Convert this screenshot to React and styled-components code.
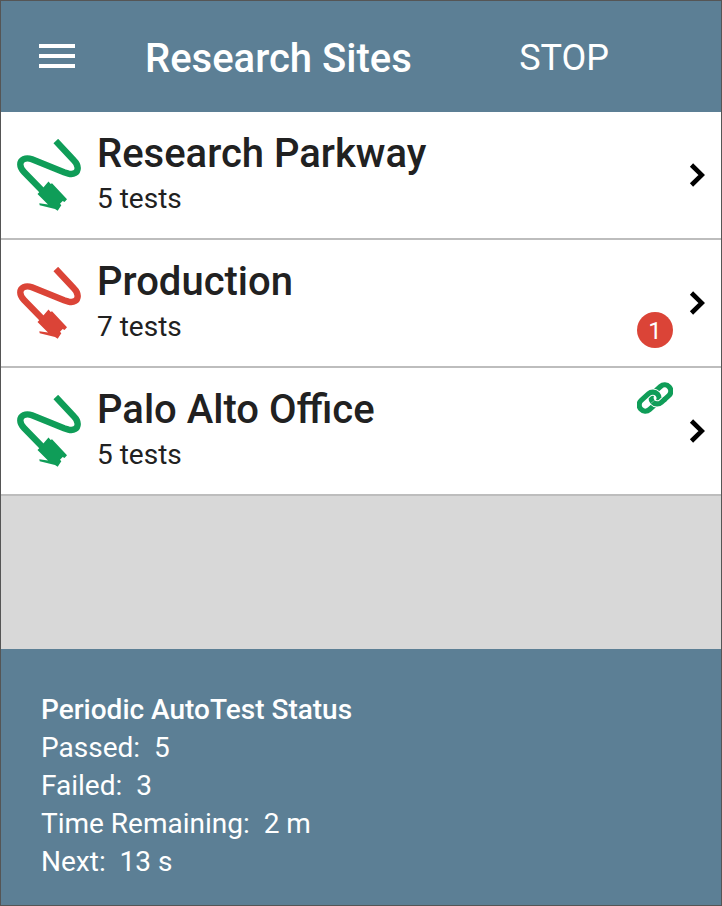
import React from 'react';
import styled, { createGlobalStyle } from 'styled-components';

const GlobalStyle = createGlobalStyle`
    * {
        box-sizing: border-box;
    }
    body {
        margin: 0;
        font-family: Roboto, sans-serif;
        color: #212121;
    }
`
const Page = styled.div`
    min-height: 100vh;
    display: flex;
    flex-direction: column;
    background-color: #d8d8d8;
    border: 1px solid #555555;
`
const Header = styled.header`
    display: flex;
    align-items: center;
    height: 111px;
    padding: 0 112px 0 38px;
    background-color: #5c7f95;
    color: white;
`
const MenuButton = styled.button`
    display: flex;
    padding: 0 0 2px;
    border: none;
    background: none;
    color: inherit;
    cursor: pointer;
`
const Title = styled.h1`
    flex: 1;
    margin: 0 0 0 70px;
    padding-top: 4px;
    font-size: 40px;
    line-height: 48px;
    font-weight: 500;
`
const StopButton = styled.button`
    padding: 2px 0 0;
    border: none;
    background: none;
    color: inherit;
    font-family: inherit;
    font-size: 36px;
    line-height: 44px;
    cursor: pointer;
`
const List = styled.ul`
    flex: 1;
    margin: 0;
    padding: 0;
    list-style: none;
`
const Row = styled.a`
    display: flex;
    align-items: center;
    height: 128px;
    padding: 0 16px;
    background-color: white;
    border-bottom: 2px solid #bdbdbd;
    color: inherit;
    text-decoration: none;
`
const Cable = styled.svg`
    flex: none;
    color: ${props => props.$failed ? '#db4437' : '#0f9d58'};
`
const Info = styled.div`
    flex: 1;
    margin-left: 16px;
`
const Name = styled.h2`
    margin: 0;
    font-size: 40px;
    line-height: 48px;
    font-weight: 500;
`
const Tests = styled.div`
    font-size: 28px;
    line-height: 42px;
`
const Marks = styled.div`
    align-self: stretch;
    display: flex;
    flex-direction: column;
    width: 36px;
    margin-right: 16px;
    padding: 14px 0 18px;
`
const Badge = styled.span`
    height: 36px;
    margin-top: auto;
    border-radius: 50%;
    background-color: #db4437;
    color: white;
    font-size: 24px;
    line-height: 38px;
    text-align: center;
`
const Status = styled.footer`
    padding: 42px 40px 24px;
    background-color: #5c7f95;
    color: white;
    font-size: 28px;
    line-height: 38px;
`
const StatusTitle = styled.div`
    font-weight: 500;
`
const StatusLine = styled.div`
    white-space: pre;
`

const sites = [
    { name: 'Research Parkway', tests: 5 },
    { name: 'Production', tests: 7, failed: 1 },
    { name: 'Palo Alto Office', tests: 5, linked: true },
]

const status = [
    ['Passed', '5'],
    ['Failed', '3'],
    ['Time Remaining', '2 m'],
    ['Next', '13 s'],
]

const CableIcon = ({ failed }) => (
    <Cable $failed={failed} width="64" height="72" viewBox="0 0 64 72" aria-hidden="true">
        <path
            d="M38.8 2 L57 21.5 C59.5 24 60.7 26.5 60.7 29 C60.7 33.7 56.5 36 51.5 34.6 L47 33.2 L15 20.3 C8.5 18 3.3 20.5 3.3 25.5 C3.3 28.5 4.8 30.7 7 33 L25.5 52"
            fill="none"
            stroke="currentColor"
            strokeWidth="6.4"
        />
        <path
            d="M31.5 42.5 L33.7 45 L35 44.3 L50 60.3 L47.5 63 L45.7 62 L43 64.7 L44.3 66.3 L40.7 71.7 L38 70 L22.7 66.3 L22.3 64.3 L31 65.5 L20.5 55 L22.7 52.7 Z"
            fill="currentColor"
        />
    </Cable>
)

// two rings, each one passes over the other once
const LinkIcon = () => (
    <svg width="36" height="32" viewBox="0 0 36 32" fill="none" aria-hidden="true">
        <g transform="translate(18 16) rotate(-42)" stroke="#0f9d58" strokeWidth="5.2">
            <rect x="-4.4" y="-4.9" width="22.4" height="12.4" rx="6.2" />
            <rect x="-18" y="-7.5" width="22.4" height="12.4" rx="6.2" stroke="white" strokeWidth="7.2" />
            <rect x="-18" y="-7.5" width="22.4" height="12.4" rx="6.2" />
            <path d="M-4.4 1.3 A6.2 6.2 0 0 0 1.8 7.5 H5" stroke="white" strokeWidth="7.2" />
            <path d="M-4.4 1.3 A6.2 6.2 0 0 0 1.8 7.5 H7" />
        </g>
    </svg>
)

const App = () => {
    return (
        <Page>
            <GlobalStyle />
            <Header>
                <MenuButton aria-label="Menu">
                    <svg width="36" height="24" viewBox="0 0 36 24" fill="currentColor">
                        <path d="M0 0h36v4H0zM0 10h36v4H0zM0 20h36v4H0z" />
                    </svg>
                </MenuButton>
                <Title>Research Sites</Title>
                <StopButton>STOP</StopButton>
            </Header>
            <List>
                {sites.map(site => (
                    <li key={site.name}>
                        <Row href="#">
                            <CableIcon failed={Boolean(site.failed)} />
                            <Info>
                                <Name>{site.name}</Name>
                                <Tests>{site.tests} tests</Tests>
                            </Info>
                            <Marks>
                                {site.linked && <LinkIcon />}
                                {site.failed && <Badge>{site.failed}</Badge>}
                            </Marks>
                            <svg width="16" height="24" viewBox="0 0 16 24" aria-hidden="true">
                                <path d="M2.5 2 L12.8 12 L2.5 22" fill="none" stroke="black" strokeWidth="4.6" />
                            </svg>
                        </Row>
                    </li>
                ))}
            </List>
            <Status>
                <StatusTitle>Periodic AutoTest Status</StatusTitle>
                {status.map(([label, value]) => (
                    <StatusLine key={label}>{label}:  {value}</StatusLine>
                ))}
            </Status>
        </Page>
    );
};

export default App;
